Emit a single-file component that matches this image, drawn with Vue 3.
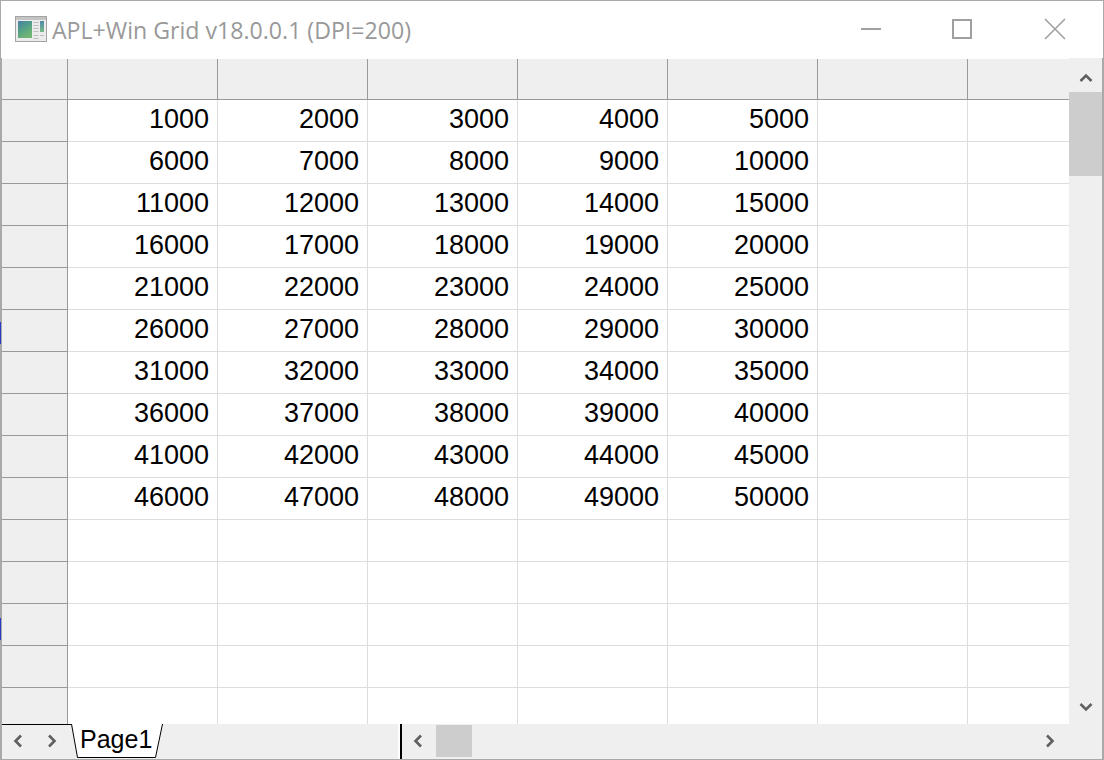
<script setup>
const cols = 7
const data = []
for (let r = 0; r < 15; r++) {
  const row = []
  for (let c = 0; c < cols - 1; c++) {
    row.push(r < 10 && c < 5 ? (r * 5 + c + 1) * 1000 : '')
  }
  data.push(row)
}
</script>

<template>
  <div class="window">
    <header class="titlebar">
      <svg class="app-icon" width="32" height="26" viewBox="0 0 32 26">
        <defs>
          <linearGradient id="panel" x1="0" y1="0" x2="0.5" y2="1">
            <stop offset="0" stop-color="#4a7ea6" />
            <stop offset="0.5" stop-color="#52a088" />
            <stop offset="1" stop-color="#72b674" />
          </linearGradient>
          <linearGradient id="side" x1="0" y1="0" x2="0" y2="1">
            <stop offset="0" stop-color="#4f8aa8" />
            <stop offset="1" stop-color="#7ab884" />
          </linearGradient>
        </defs>
        <rect x="0.5" y="0.5" width="31" height="25" fill="#ececec" stroke="#a4a4a4" />
        <rect x="1" y="1" width="30" height="3" fill="#c4c4c4" />
        <rect x="3" y="5" width="14" height="17" fill="url(#panel)" />
        <rect x="25" y="5" width="4" height="11" fill="url(#side)" />
        <path d="M18.500 6.500h5M18.500 9.500h5M18.500 12.500h5M18.500 15.500h5M18.500 19.500h5M18.500 22.500h5M25 19.500h4" stroke="#bcbcbc" fill="none" />
      </svg>
      <span class="title">APL+Win Grid v18.0.0.1 (DPI=200)</span>
      <div class="controls">
        <svg class="ctl" width="22" height="22" viewBox="0 0 22 22"><path d="M1 11h20" stroke="#a0a0a0" stroke-width="2" /></svg>
        <svg class="ctl" width="22" height="22" viewBox="0 0 22 22"><rect x="2" y="2" width="18" height="18" fill="none" stroke="#a0a0a0" stroke-width="2" /></svg>
        <svg class="ctl" width="22" height="22" viewBox="0 0 22 22"><path d="M1 1l20 20M21 1L1 21" stroke="#a0a0a0" stroke-width="1.600" /></svg>
      </div>
    </header>

    <main class="content">
      <div class="grid">
        <div class="row head">
          <div class="cell corner"></div>
          <div v-for="c in cols - 1" :key="c" class="cell colhead"></div>
          <div class="cell colhead last"></div>
        </div>
        <div v-for="(row, r) in data" :key="r" class="row">
          <div class="cell rowhead"></div>
          <div v-for="(v, c) in row" :key="c" class="cell num">{{ v }}</div>
          <div class="cell num last"></div>
        </div>
      </div>
      <aside class="vscroll">
        <svg class="arrow-v" width="14" height="10" viewBox="0 0 14 10"><path d="M1.500 8L7 2.500 12.500 8" fill="none" stroke="#606060" stroke-width="2.600" /></svg>
        <div class="vthumb"></div>
        <div class="spacer"></div>
        <svg class="arrow-v" width="14" height="10" viewBox="0 0 14 10"><path d="M1.500 2L7 7.500 12.500 2" fill="none" stroke="#606060" stroke-width="2.600" /></svg>
      </aside>
    </main>

    <footer class="bottombar">
      <div class="nav">
        <svg width="10" height="14" viewBox="0 0 10 14"><path d="M8 1.500L2.500 7 8 12.500" fill="none" stroke="#606060" stroke-width="2.600" /></svg>
        <svg width="10" height="14" viewBox="0 0 10 14"><path d="M2 1.500L7.500 7 2 12.500" fill="none" stroke="#606060" stroke-width="2.600" /></svg>
      </div>
      <div class="tab">
        <svg class="tab-shape" width="92" height="34" viewBox="0 0 92 34"><path d="M0.500 0L6.500 33.500H84.500L91.500 0" fill="#fff" stroke="#000" /></svg>
        <span class="tab-label">Page1</span>
      </div>
      <div class="tab-rest"></div>
      <div class="splitter"></div>
      <div class="hscroll">
        <svg class="arrow-h" width="10" height="14" viewBox="0 0 10 14"><path d="M8 1.500L2.500 7 8 12.500" fill="none" stroke="#606060" stroke-width="2.600" /></svg>
        <div class="hthumb"></div>
        <div class="spacer"></div>
        <svg class="arrow-h right" width="10" height="14" viewBox="0 0 10 14"><path d="M2 1.500L7.500 7 2 12.500" fill="none" stroke="#606060" stroke-width="2.600" /></svg>
      </div>
    </footer>
    <i class="mark m1"></i>
    <i class="mark m2"></i>
  </div>
</template>

<style>
html, body { margin: 0; background: #fff; overflow: hidden; }
</style>

<style scoped>
.window {
  position: relative;
  width: 1104px;
  height: 760px;
  box-sizing: border-box;
  border: 1px solid #a9a9a9;
  display: flex;
  flex-direction: column;
  background: #fff;
}
.titlebar {
  height: 57px;
  flex: none;
  display: flex;
  align-items: center;
  padding-left: 14px;
}
.app-icon { margin-bottom: 1px; }
.title {
  margin-left: 5px;
  font: 23.13px "Open Sans", sans-serif;
  color: #999;
  white-space: nowrap;
}
.controls {
  margin-left: auto;
  display: flex;
  padding-right: 37px;
  padding-bottom: 1px;
}
.ctl { display: block; }
.ctl + .ctl { margin-left: 69px; }
.ctl + .ctl + .ctl { margin-left: 71px; }
.content {
  height: 666px;
  flex: none;
  display: flex;
  border-left: 1px solid #a9a9a9;
  border-right: 1px solid #a9a9a9;
}
.grid {
  width: 1067px;
  flex: none;
  overflow: hidden;
}
.row {
  display: flex;
  height: 42px;
}
.cell {
  box-sizing: border-box;
  width: 150px;
  flex: none;
  border-right: 1px solid #ddd;
  border-bottom: 1px solid #ddd;
}
.cell.last { width: 101px; border-right: 0; }
.corner, .rowhead {
  width: 66px;
  background: #efefef;
  border-right: 1px solid #999;
  border-bottom: 1px solid #999;
}
.colhead {
  background: #efefef;
  border-right: 1px solid #999;
  border-bottom: 1px solid #999;
}
.head .cell { margin-top: 1px; height: 41px; }
.num {
  font: 27px/39px "Liberation Sans", Arial, sans-serif;
  color: #000;
  text-align: right;
  padding-right: 8px;
}
.mark {
  position: absolute;
  left: -1px;
  width: 1px;
  height: 22px;
  background: #2a3ac8;
}
.m1 { top: 321px; }
.m2 { top: 617px; }
.vscroll {
  flex: 1;
  background: #efefef;
  display: flex;
  flex-direction: column;
  align-items: center;
}
.arrow-v { display: block; flex: none; }
.vscroll .arrow-v:first-child { margin-top: 15px; margin-bottom: 9px; }
.vscroll .arrow-v:last-child { margin-bottom: 12px; }
.vthumb {
  width: 100%;
  height: 84px;
  flex: none;
  background: #cdcdcd;
}
.spacer { flex: 1; }
.bottombar {
  height: 35px;
  flex: none;
  display: flex;
  background: #efefef;
  border-left: 1px solid #a9a9a9;
  border-right: 1px solid #a9a9a9;
}
.nav {
  box-sizing: border-box;
  width: 69px;
  height: 33px;
  flex: none;
  border-top: 1px solid #000;
  display: flex;
  align-items: center;
  gap: 24px;
  padding-left: 11px;
}
.tab {
  position: relative;
  width: 92px;
  flex: none;
}
.tab-shape { display: block; }
.tab-label {
  position: absolute;
  left: 9px;
  top: 0;
  font: 25px/31px "Liberation Sans", Arial, sans-serif;
  color: #000;
}
.tab-rest { width: 237px; flex: none; }
.splitter {
  width: 2px;
  flex: none;
  background: #000;
  box-shadow: -2px 0 0 #fff;
}
.hscroll {
  flex: 1;
  display: flex;
  align-items: flex-start;
}
.arrow-h { flex: none; margin-left: 11px; margin-top: 10px; }
.arrow-h.right { margin-right: 47px; }
.hthumb {
  width: 36px;
  height: 32px;
  margin-top: 1px;
  margin-left: 13px;
  flex: none;
  background: #cdcdcd;
}
</style>
